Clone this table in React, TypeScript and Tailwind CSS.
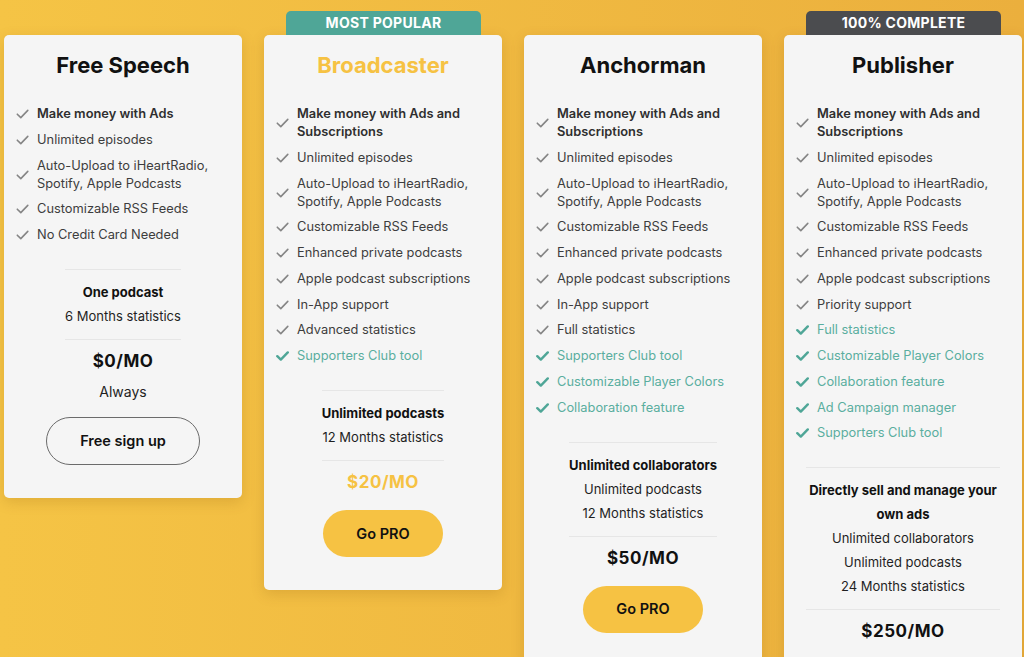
type Feature = { text: string; bold?: boolean; teal?: boolean };

type Plan = {
  name: string;
  nameTone: string;
  badge?: { label: string; tone: string };
  features: Feature[];
  perks: { bold: string; rest: string[] };
  price: string;
  priceTone: string;
  note?: string;
  cta: string;
  ctaTone: string;
};

const base: Feature[] = [
  { text: "Make money with Ads and Subscriptions", bold: true },
  { text: "Unlimited episodes" },
  { text: "Auto-Upload to iHeartRadio, Spotify, Apple Podcasts" },
  { text: "Customizable RSS Feeds" },
  { text: "Enhanced private podcasts" },
  { text: "Apple podcast subscriptions" },
];

const plans: Plan[] = [
  {
    name: "Free Speech",
    nameTone: "text-[#111111]",
    features: [
      { text: "Make money with Ads", bold: true },
      { text: "Unlimited episodes" },
      { text: "Auto-Upload to iHeartRadio, Spotify, Apple Podcasts" },
      { text: "Customizable RSS Feeds" },
      { text: "No Credit Card Needed" },
    ],
    perks: { bold: "One podcast", rest: ["6 Months statistics"] },
    price: "$0/MO",
    priceTone: "text-[#111111]",
    note: "Always",
    cta: "Free sign up",
    ctaTone: "w-[154px] h-12 border border-[#6b6b6b] bg-transparent",
  },
  {
    name: "Broadcaster",
    nameTone: "text-[#f6c243]",
    badge: { label: "MOST POPULAR", tone: "bg-[#4fa697]" },
    features: [
      ...base,
      { text: "In-App support" },
      { text: "Advanced statistics" },
      { text: "Supporters Club tool", teal: true },
    ],
    perks: { bold: "Unlimited podcasts", rest: ["12 Months statistics"] },
    price: "$20/MO",
    priceTone: "text-[#f6c243]",
    cta: "Go PRO",
    ctaTone: "w-[120px] h-[47px] bg-[#f6c243]",
  },
  {
    name: "Anchorman",
    nameTone: "text-[#111111]",
    features: [
      ...base,
      { text: "In-App support" },
      { text: "Full statistics" },
      { text: "Supporters Club tool", teal: true },
      { text: "Customizable Player Colors", teal: true },
      { text: "Collaboration feature", teal: true },
    ],
    perks: { bold: "Unlimited collaborators", rest: ["Unlimited podcasts", "12 Months statistics"] },
    price: "$50/MO",
    priceTone: "text-[#111111]",
    cta: "Go PRO",
    ctaTone: "w-[120px] h-[47px] bg-[#f6c243]",
  },
  {
    name: "Publisher",
    nameTone: "text-[#111111]",
    badge: { label: "100% COMPLETE", tone: "bg-[#4b4c4f]" },
    features: [
      ...base,
      { text: "Priority support" },
      { text: "Full statistics", teal: true },
      { text: "Customizable Player Colors", teal: true },
      { text: "Collaboration feature", teal: true },
      { text: "Ad Campaign manager", teal: true },
      { text: "Supporters Club tool", teal: true },
    ],
    perks: {
      bold: "Directly sell and manage your own ads",
      rest: ["Unlimited collaborators", "Unlimited podcasts", "24 Months statistics"],
    },
    price: "$250/MO",
    priceTone: "text-[#111111]",
    cta: "Go PRO",
    ctaTone: "w-[120px] h-[47px] bg-[#f6c243]",
  },
];

// thin gray tick for base features, heavier teal one for the extras
const Tick = ({ teal }: { teal?: boolean }) => (
  <svg
    width="13"
    height="10"
    viewBox="0 0 13 10"
    fill="none"
    className={teal ? "flex-none text-[#4fa697]" : "flex-none text-[#858585]"}
  >
    <path
      d="M1.3 5.2 L4.8 8.6 L11.8 1.4"
      stroke="currentColor"
      strokeWidth={teal ? 2.4 : 1.6}
      strokeLinecap="round"
      strokeLinejoin="round"
    />
  </svg>
);

const PlanCard = ({ plan }: { plan: Plan }) => (
  <div className="relative w-[238px] flex-none rounded-[5px] bg-[#f5f5f5] pt-[14px] pb-[33px] shadow-[0_4px_14px_rgba(120,70,0,0.18)]">
    {plan.badge && (
      <div
        className={`absolute -top-6 left-[22px] right-[21px] h-6 rounded-t-[5px] text-center text-[14px] font-bold leading-6 tracking-[0.02em] text-white ${plan.badge.tone}`}
      >
        {plan.badge.label}
      </div>
    )}
    <h2 className={`text-center text-[22px] font-bold leading-8 ${plan.nameTone}`}>{plan.name}</h2>

    <ul className="mt-[24px] flex flex-col gap-[7.75px] pl-3 pr-[18px]">
      {plan.features.map((f) => (
        <li key={f.text} className="flex items-center gap-2">
          <Tick teal={f.teal} />
          <span
            className={`text-[12.85px] leading-[18px] ${
              f.teal ? "text-[#5aae9f]" : f.bold ? "font-semibold text-[#2f2f2f]" : "text-[#3d3d3d]"
            }`}
          >
            {f.text}
          </span>
        </li>
      ))}
    </ul>

    <div className="mt-[25px] px-[22px]">
      <div className="mx-auto w-fit border-y border-[#e6e6e6] pt-[10px] pb-[11px] text-center text-[13px] leading-6 text-[#1f1f1f]">
        <p className="font-bold text-[#111111]">{plan.perks.bold}</p>
        {plan.perks.rest.map((r) => (
          <p key={r}>{r}</p>
        ))}
      </div>
    </div>

    <p className={`mt-[7px] text-center text-[17px] font-bold leading-7 tracking-[0.03em] ${plan.priceTone}`}>
      {plan.price}
    </p>
    {plan.note && <p className="mt-[5px] text-center text-[14px] leading-6 text-[#1f1f1f]">{plan.note}</p>}

    <button
      className={`mx-auto flex items-center justify-center rounded-full text-[14.5px] font-semibold text-[#111111] ${
        plan.note ? "mt-[13px]" : "mt-[14px]"
      } ${plan.ctaTone}`}
    >
      {plan.cta}
    </button>
  </div>
);

export default function App() {
  return (
    <div className="min-h-[657px] bg-gradient-to-r from-[#f5c445] to-[#ebaf3d] font-['Inter','Noto_Sans',sans-serif] antialiased">
      <div className="flex items-start gap-[22px] px-1 pt-[35px] pb-10">
        {plans.map((p) => (
          <PlanCard key={p.name} plan={p} />
        ))}
      </div>
    </div>
  );
}
